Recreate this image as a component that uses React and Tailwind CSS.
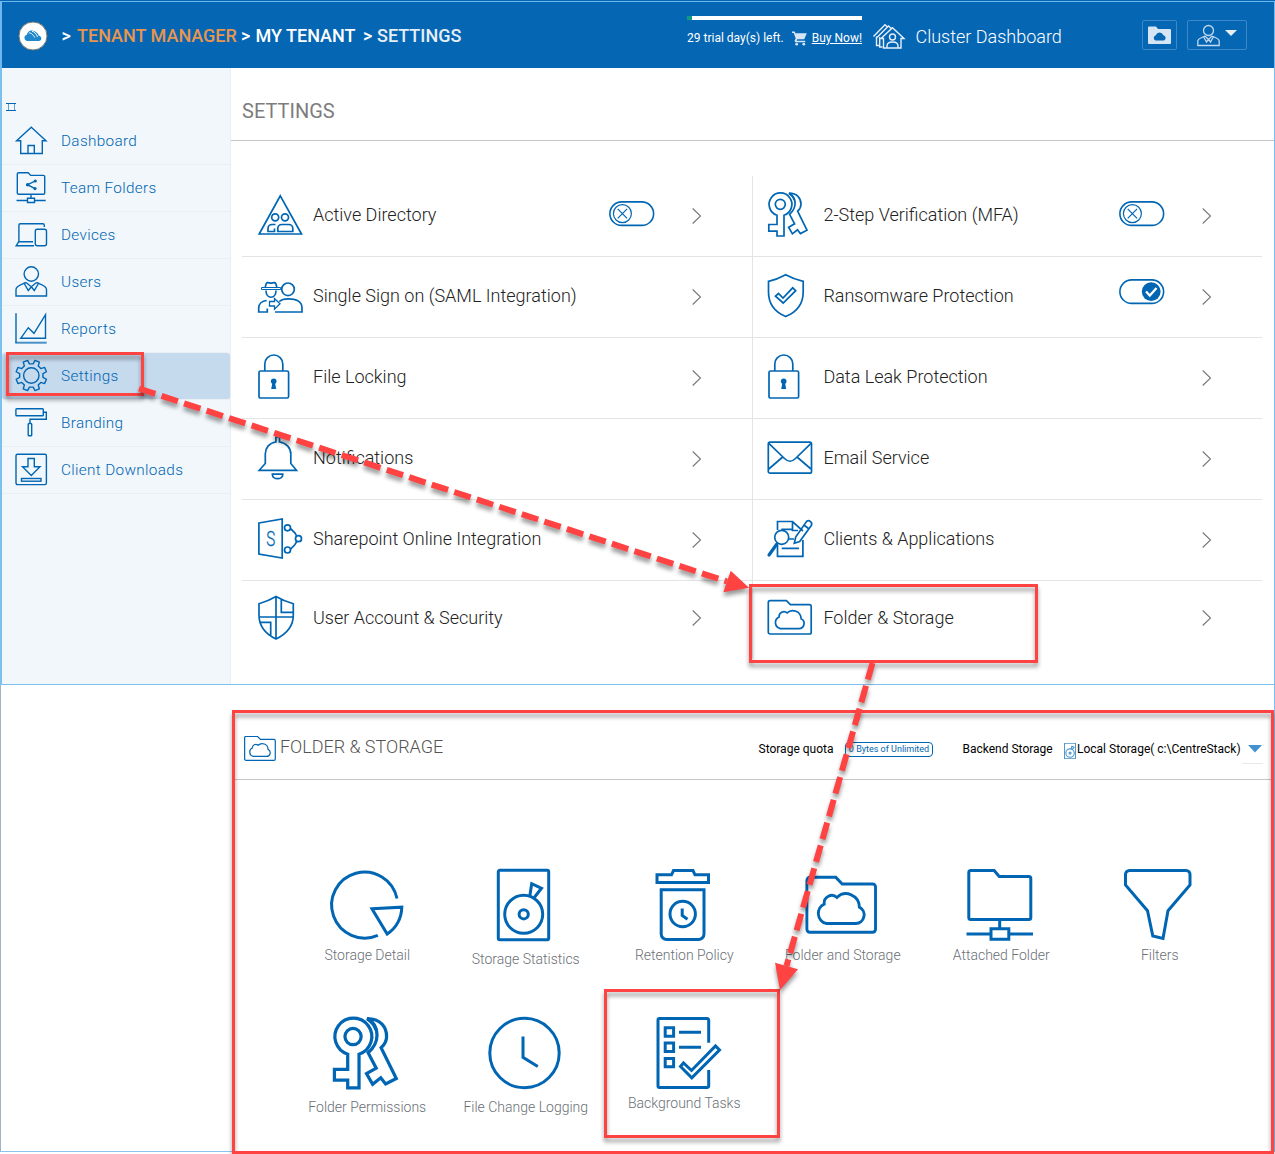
import React from "react";

const BLUE = "#0066b3";

function Svg({ w, h, sw = 1.6, color = BLUE, className = "", children }) {
  return (
    <svg
      width={w}
      height={h}
      viewBox={`0 0 ${w} ${h}`}
      fill="none"
      stroke={color}
      strokeWidth={sw}
      className={`shrink-0 overflow-visible ${className}`}
    >
      {children}
    </svg>
  );
}

/* ---------- shared drawings ---------- */

const FolderCloud = () => (
  <>
    <path d="M1.3 8.5a1.8 1.8 0 0 1 1.8-1.8h16.3l4 4h19a1.8 1.8 0 0 1 1.8 1.8v25.7a1.8 1.8 0 0 1-1.8 1.8H3.1a1.8 1.8 0 0 1-1.8-1.8z" />
    <path d="M13.300 34.600h18.600a5.200 5.200 0 0 0 2.200-9.900a8.300 8.300 0 0 0-14-5.800a4.800 4.800 0 0 0-8 4a6.200 6.200 0 0 0 1.200 11.700z" />
  </>
);

const Keys = () => (
  <>
    <circle cx="13.3" cy="13.3" r="5" />
    <path d="M10 24.2V33.5H1.8V40.2H10V45H17V24.2A11.4 11.4 0 1 0 10 24.2z" />
    <path d="M22 2.2c8.500 0 12 5.500 12 11c0 3-1.200 5-3.400 7l9.400 19l-6.600 3.400l-3-3.800l-5 4l-3.800-6.600l6-3.400l-5-9.500c4-3.500 5.500-7 5.500-11c0-4.500-2-8-6.100-10.100z" />
    <path d="M22 2.200c3 2 4.500 4 5.500 7" />
  </>
);

const Disk = () => (
  <>
    <rect x="11.300" y="3.300" width="50.400" height="69.400" rx="1.500" />
    <circle cx="36.700" cy="47.300" r="19" />
    <circle cx="36.700" cy="47.300" r="4.600" />
    <path d="M42.700 29.700L44.700 16.700L54.500 21.300L46.500 31.500" />
  </>
);

const Lock = () => (
  <>
    <rect x="2" y="18" width="29.600" height="27" rx="1.500" />
    <path d="M7.800 18V11a9 9 0 0 1 18 0v7" />
    <circle cx="16.700" cy="28.300" r="2.800" fill={BLUE} stroke="none" />
    <path d="M15.500 29h2.400l1.300 7h-5z" fill={BLUE} stroke="none" />
  </>
);

/* ---------- sidebar ---------- */

function gearPath(cx, cy, teeth, ro, ri) {
  const step = (Math.PI * 2) / teeth;
  let d = "";
  for (let i = 0; i < teeth; i++) {
    const a = -Math.PI / 2 + step / 2 + i * step;
    const pts = [
      [ri, a - step * 0.3],
      [ro, a - step * 0.19],
      [ro, a + step * 0.19],
      [ri, a + step * 0.3],
    ];
    pts.forEach(([r, t], k) => {
      d += `${i === 0 && k === 0 ? "M" : "L"}${(cx + r * Math.cos(t)).toFixed(2)} ${(cy + r * Math.sin(t)).toFixed(2)}`;
    });
  }
  return d + "Z";
}

const navIcons = {
  dashboard: (
    <>
      <path d="M16.300 2.300L31 15.700H27.300V28.500H5.700V15.700H1.600z" />
      <path d="M13 28.500V20.500h6.300v8" />
    </>
  ),
  team: (
    <>
      <path d="M2.300 2a1.300 1.300 0 0 1 1.300-1.300h9.600l2.500 2.700h12.700a1.300 1.300 0 0 1 1.300 1.300v16.300a1.300 1.300 0 0 1-1.300 1.300H3.600a1.300 1.300 0 0 1-1.300-1.300z" />
      <path d="M16 22.300v4M12.500 26.300h7v4.200h-7zM1.500 28.500h11M19.500 28.500h11.200M20.500 8.800L12.500 12.700L20 16.700" />
      <g fill={BLUE} stroke="none">
        <circle cx="12.600" cy="12.700" r="1.700" />
        <circle cx="20.300" cy="9" r="1.600" />
        <circle cx="20" cy="16.600" r="1.600" />
      </g>
    </>
  ),
  devices: (
    <>
      <path d="M29.300 8V6.200a1.500 1.500 0 0 0-1.500-1.500H5.400a1.500 1.500 0 0 0-1.500 1.500V22.500L1.200 26.700H19M3.900 22.700H18" />
      <rect x="20.300" y="10.200" width="11.200" height="16.500" rx="2" />
    </>
  ),
  users: (
    <>
      <circle cx="16.300" cy="8" r="7.200" />
      <path d="M11 16.500C7 18.500 1 19.500 1 23.500V30H31.500V23.500C31.500 19.500 25.500 18.500 21.500 16.500M11 16.500L16.300 20.800L13.300 24.500L9.500 18M21.500 16.500L16.300 20.800L19.300 24.500L23.200 18" />
    </>
  ),
  reports: (
    <>
      <path d="M1 .3V30" />
      <path d="M.3 29.700H31.700" strokeWidth="2" strokeOpacity=".7" />
      <path d="M5.700 25.300L13.300 14.700L19 20.300L30.500 1.700V25.300z" />
    </>
  ),
  settings: (
    <>
      <path d={gearPath(16.3, 15.5, 8, 15.6, 11.8)} strokeLinejoin="round" />
      <circle cx="16.300" cy="15.500" r="7.700" />
    </>
  ),
  branding: (
    <>
      <rect x=".9" y="1.800" width="27.400" height="7" rx=".8" />
      <path d="M28.300 5.300H31.300V12.300H15V16.500" />
      <rect x="13.200" y="16.500" width="3.500" height="12.300" rx=".8" />
    </>
  ),
  downloads: (
    <>
      <rect x="1" y=".2" width="30.400" height="30.400" rx="1.500" />
      <path d="M13 4.500H19.300V12.700H25L16.300 21.500L7.500 12.700H13z" />
      <rect x="6.500" y="24.500" width="19.500" height="2.700" />
    </>
  ),
};

const nav = [
  ["dashboard", "Dashboard"],
  ["team", "Team Folders"],
  ["devices", "Devices"],
  ["users", "Users"],
  ["reports", "Reports"],
  ["settings", "Settings"],
  ["branding", "Branding"],
  ["downloads", "Client Downloads"],
];

function Sidebar() {
  return (
    <aside className="w-[229px] shrink-0 border-r border-[#e9eef2] bg-[#f1f7fb]">
      <div className="h-[50px] pt-[35px] pl-1">
        <Svg w={10} h={8} sw={1}>
          <path d="M0 .5H10M0 7.500H10" />
          <path d="M2.500 .5V7.500M8.500 .5V7.500" strokeOpacity=".6" />
        </Svg>
      </div>
      <nav>
        {nav.map(([id, label]) => (
          <a
            key={id}
            className={`flex h-[47px] border-b border-[#eaeff3] pt-[7px] pl-[13px] ${
              id === "settings" ? "rounded-[3px] bg-[#c6daee]" : ""
            }`}
          >
            <Svg w={32} h={32} sw={1.4}>
              {navIcons[id]}
            </Svg>
            <span className="ml-3.5 pt-1.5 text-[15.300px] leading-5 font-light tracking-[0.340px] text-[#0066b3]">
              {label}
            </span>
          </a>
        ))}
      </nav>
    </aside>
  );
}

/* ---------- settings grid ---------- */

const rowIcons = {
  ad: (
    <>
      <path d="M23.300 4.800L44.500 43H2.200z" />
      <circle cx="18.200" cy="26.300" r="3.500" />
      <circle cx="28" cy="26.300" r="3.500" />
      <path d="M20.800 40.500V37.500a4 4 0 0 1 4-4h7a4 4 0 0 1 4 4v3zM18.500 33.500H15a4 4 0 0 0-4 4v3h6.500v-3" />
    </>
  ),
  sso: (
    <>
      <path d="M8.300 15.500c.3-3 .7-4.500 2.200-4.900c1.500-.3 2 .6 3.500 .6s2-.9 3.500-.6c1.500 .4 2 1.900 2.200 4.900" />
      <path d="M4.500 15.500h19.200v2H4.500z" strokeWidth="1" />
      <path d="M9 18.500c0 9 10 9 10 0" />
      <circle cx="31" cy="17.300" r="6.300" />
      <path d="M22.300 29.500c2-2 5-2.700 9-2.700c8 0 13.700 3 13.700 9V40H18M9.700 28.500C5 29 1.700 32 1.700 36V40h8.600V36.500" />
      <path d="M12.500 29.500h5v-3L23 31.800l-5.500 5.300V34h-5z" strokeWidth="1.300" />
    </>
  ),
  lock: <Lock />,
  bell: (
    <>
      <path d="M18.900 8V3h3.600v5c7 1 11.300 6 11.300 12V29.500L39.500 36.300H2.200L8.300 29.500V20c0-6 3.700-11 10.600-12z" />
      <path d="M15.300 40.200h10.500c0 6-10.500 6-10.500 0z" />
    </>
  ),
  sharepoint: (
    <>
      <path d="M1.900 8L25.200 3.900V43L1.900 39z" />
      <circle cx="30.500" cy="12.800" r="3" />
      <circle cx="41.500" cy="23.700" r="3" />
      <circle cx="30.500" cy="35" r="3" />
      <path d="M33.300 13.300l4.500 4.500l2 3.300M33.300 34.300l4.500-4.500l2-3.300" />
      <text
        x="13.700"
        y="31"
        textAnchor="middle"
        fontSize="20"
        fontWeight="300"
        textLength="9"
        lengthAdjust="spacingAndGlyphs"
        fill={BLUE}
        stroke={BLUE}
        strokeWidth=".3"
      >
        S
      </text>
    </>
  ),
  shield: (
    <path d="M19 2.500C13 6 8 8 2 9.700V21c0 11 6.500 19 17 24c10.500-5 17.300-13 17.300-24V9.700C30 8 25 6 19 2.500zM19 2.500V45M2 23H36.300M24.300 5.800V18.300H36.300M3.200 28.300H13.700V42" />
  ),
  keys: <Keys />,
  ransom: (
    <>
      <path d="M18.700 2.800C13 6 8 8 1.500 9.300V20c0 11 5 19.500 17.200 24.500C31 39.500 36.200 31 36.200 20V9.300C30 8 24.500 6 18.700 2.800z" />
      <path d="M8.500 24.200L11.500 21.500L16 26L25.700 15.800L28.700 18.700L16.200 31z" />
    </>
  ),
  mail: (
    <>
      <rect x="1.300" y="8.200" width="43.200" height="31" rx="1.800" />
      <path d="M1.800 9.300L17.500 24.500c4 3.800 7 3.800 11 0L44 9.300M1.800 35L15.700 23M44 35L30 23" />
    </>
  ),
  clients: (
    <>
      <path d="M10.500 15V6.500H25.500L35.900 16M25.500 6.500V15.500H31M35.900 25V41.300H10.500V30" />
      <circle cx="14.700" cy="22.300" r="7" />
      <path d="M9.700 29.300L2 40" strokeWidth="3.200" strokeLinecap="round" />
      <path d="M14.300 14.300H25.700M22 24H27M14.700 33.300H32" />
      <path d="M39.500 6.500a3.200 3.200 0 0 1 4.800 4L32.700 26.500L27.300 28.300L28.700 22zM37 10l5 4" />
    </>
  ),
  folder: <FolderCloud />,
};

function Toggle({ on }) {
  return (
    <Svg w={46} h={26} sw={1.6}>
      <rect x=".9" y=".9" width="43.700" height="23.500" rx="11.750" />
      {on ? (
        <>
          <circle cx="32.200" cy="12.600" r="9.400" fill={BLUE} stroke="none" />
          <path d="M27 12.500l3.800 4l6.700-7.500" stroke="#fff" strokeWidth="2.300" />
        </>
      ) : (
        <>
          <circle cx="13.400" cy="12.600" r="9" strokeWidth="1.200" />
          <path d="M8.700 7.900l9.400 9.400M18.100 7.900l-9.400 9.400" strokeWidth="1.200" />
        </>
      )}
    </Svg>
  );
}

const leftRows = [
  ["ad", "Active Directory", "off"],
  ["sso", "Single Sign on (SAML Integration)"],
  ["lock", "File Locking"],
  ["bell", "Notifications"],
  ["sharepoint", "Sharepoint Online Integration"],
  ["shield", "User Account & Security"],
];
const rightRows = [
  ["keys", "2-Step Verification (MFA)", "off"],
  ["ransom", "Ransomware Protection", "on"],
  ["lock", "Data Leak Protection"],
  ["mail", "Email Service"],
  ["clients", "Clients & Applications"],
  ["folder", "Folder & Storage"],
];

function SettingRow({ id, label, toggle, last }) {
  return (
    <div
      className={`flex ${
        last ? "h-[77px] pt-[13px]" : "h-[81px] border-b border-[#e4e4e4] pt-[15px]"
      }`}
    >
      <Svg w={48} h={48} sw={1.7}>
        {rowIcons[id]}
      </Svg>
      <span className="ml-2 w-[296px] pt-3 text-[18px] leading-6 font-light whitespace-nowrap text-[#222]">
        {label}
      </span>
      <div className={`w-[83px] ${toggle === "on" ? "pt-[7px]" : "pt-[10px]"}`}>
        {toggle && <Toggle on={toggle === "on"} />}
      </div>
      <Svg w={10} h={16} sw={1.1} color="#777" className={last ? "mt-4" : "mt-[17px]"}>
        <path d="M.7 .5L8.500 8L.7 15.500" />
      </Svg>
    </div>
  );
}

function SettingsPanel() {
  return (
    <main className="flex-1">
      <h1 className="h-[73px] border-b border-[#c6c6c6] pt-[31px] pl-[11px] text-[20px] leading-6 font-normal text-[#7d7d7d]">
        SETTINGS
      </h1>
      <div className="mt-[35px] ml-[11px] flex">
        <div className="w-[511px] border-r border-[#e4e4e4] [&>div]:pl-[15px]">
          {leftRows.map(([id, label, t], i) => (
            <SettingRow key={id} id={id} label={label} toggle={t} last={i === 5} />
          ))}
        </div>
        <div className="w-[509px] [&>div]:pl-[14.400px]">
          {rightRows.map(([id, label, t], i) => (
            <SettingRow key={id} id={id} label={label} toggle={t} last={i === 5} />
          ))}
        </div>
      </div>
    </main>
  );
}

/* ---------- header ---------- */

function Header() {
  return (
    <header className="flex h-[68px] shrink-0 bg-[#0566b4] text-white">
      <div className="mt-px flex flex-1 border-t border-l-2 border-[#6fb8ee]">
        <svg width="28" height="28" viewBox="0 0 28 28" className="mt-5 ml-[17px] shrink-0 overflow-visible">
          <circle cx="14" cy="14" r="14" fill="#fff" stroke="#7d7a6c" strokeWidth="1" />
          <path
            d="M8.500 19a3.200 3.200 0 0 1-.6-6.300c.2-3 4-5.500 7.300-3.700c2.500 1 4 2.800 4.500 4.500c3.500 .8 3.500 5.500 0 5.500z"
            fill="#1f87cc"
          />
          <path d="M9.800 11c2.500-.5 4.500 2 6 4.500M13 9.300c2.200 0 4.500 2.700 5.500 5.500" stroke="#fff" strokeWidth="1" fill="none" />
        </svg>
        <div className="flex pt-[22px] pl-[14.500px] text-[18px] leading-6 font-medium whitespace-nowrap">
          <span className="w-[15.500px]">&gt;</span>
          <span className="w-[164px] text-[#e8954f]">TENANT MANAGER</span>
          <span className="w-[14.500px]">&gt;</span>
          <span className="w-[107.500px]">MY TENANT</span>
          <span className="w-[14px]">&gt;</span>
          <span className="text-[#e6eef6]">SETTINGS</span>
        </div>
      </div>
      <div className="mt-px flex w-[588px] border-t border-r border-[#6fb8ee]">
        <div className="w-[175px] pt-3.5">
          <div className="h-1 border-l-[5px] border-[#0e9a84] bg-white" />
          <div className="flex pt-[9px] text-[12px] leading-[18px]">
            <span className="w-[105px] whitespace-nowrap">29 trial day(s) left.</span>
            <svg width="15" height="15" viewBox="0 0 15 15" className="mt-0.5 mr-[5px] shrink-0" fill="#d5e5f4">
              <path d="M0 .5h2.700l.7 1.700h11.400l-2.600 6H5.400l-.8 1.600h8.600v1.500H3.500L2.400 10l1.300-2.500L1.700 2H0z" />
              <circle cx="4.700" cy="13.200" r="1.400" />
              <circle cx="11.800" cy="13.200" r="1.400" />
            </svg>
            <span className="whitespace-nowrap underline">Buy Now!</span>
          </div>
        </div>
        <Svg w={32} h={25} sw={1.4} color="#e6eff8" className="mt-[22px] ml-[10.500px]">
          <path d="M.5 12.500L12 .8L15 3.500M4 13.500L15.500 2L19 5.200M8 14.500L19.500 3.700L31 14.500H28V24H10.500V14.500z" />
          <path d="M3.500 12.500V21.500H6.500M6.700 13V23H9.500" />
          <circle cx="19.500" cy="13" r="3" />
          <path d="M14 24v-2c0-3 2-4 5.500-4s5.500 1 5.500 4v2" />
        </Svg>
        <span className="ml-[11px] pt-[23px] text-[18px] leading-6 font-light whitespace-nowrap">
          Cluster Dashboard
        </span>
        <div className="mt-[18px] mr-[27px] ml-auto flex gap-2.5">
          <div className="flex h-[30px] w-[35px] items-center justify-center rounded-xs border border-[#3d88c8]">
            <svg width="23" height="18" viewBox="0 0 23 18">
              <path d="M0 1.500A1 1 0 0 1 1 .5h7l2 2.500h12a1 1 0 0 1 1 1V17a1 1 0 0 1-1 1H1a1 1 0 0 1-1-1z" fill="#d5e5f4" />
              <path d="M7.500 14.500a2.800 2.800 0 0 1 .3-5.300a4 4 0 0 1 7.500 0a2.800 2.800 0 0 1 .7 5.300z" fill="#0566b4" />
            </svg>
          </div>
          <div className="flex h-[30px] w-[60px] rounded-xs border border-[#3d88c8] pt-1 pl-[9px]">
            <Svg w={23} h={21} sw={1.3} color="#c2d9ee">
              <circle cx="11.500" cy="5.500" r="5" />
              <path d="M8 11C5 12.500 .8 13.500 .8 16v4.500H22.200V16c0-2.500-4.200-3.500-7.200-5M8 11l3.500 3.500l-2 2.500l-2.800-5M15 11l-3.500 3.500l2 2.500l2.800-5" />
            </Svg>
            <svg width="12" height="6" viewBox="0 0 12 6" className="mt-[5px] ml-[5px]">
              <path d="M0 0H12L6 6z" fill="#e6eff8" />
            </svg>
          </div>
        </div>
      </div>
    </header>
  );
}

/* ---------- folder & storage panel ---------- */

const tiles = [
  {
    label: "Storage Detail",
    icon: (
      <>
        <path d="M68 31.500A33 33 0 1 0 48.800 68.300" />
        <path d="M43 41.800L72.800 40.200A34 34 0 0 1 58.200 67z" />
      </>
    ),
  },
  { label: "Storage Statistics", low: true, icon: <Disk /> },
  {
    label: "Retention Policy",
    icon: (
      <>
        <path d="M11 15.500V7.800H25.500L27.500 3.500H47L49 7.800H62.500V15.500z" />
        <path d="M15.200 22.700H58V67a5.500 5.500 0 0 1-5.500 5.500H20.700a5.500 5.500 0 0 1-5.500-5.500z" />
        <circle cx="36.700" cy="47" r="12.700" />
        <path d="M36.200 41.500V48.500L41.500 52.300" />
      </>
    ),
  },
  {
    label: "Folder and Storage",
    icon: (
      <g transform="translate(.8 -.7) scale(1.600 1.650)" strokeWidth="1.800">
        <FolderCloud />
      </g>
    ),
  },
  {
    label: "Attached Folder",
    icon: (
      <>
        <path d="M5.800 5.500a2 2 0 0 1 2-2h23.400l5 6h29.600a2 2 0 0 1 2 2V50.500a2 2 0 0 1-2 2H7.800a2 2 0 0 1-2-2z" />
        <path d="M36.700 52.500V61.500M28 61.800H45.800V72.300H28zM3.500 67H28M45.800 67H70" />
      </>
    ),
  },
  {
    label: "Filters",
    icon: (
      <path d="M4.500 7.500a4 4 0 0 1 4-4H65a4 4 0 0 1 4 4V18L47 43.700L42 71.500L31.800 69L26.500 43.700L4.500 18z" />
    ),
  },
  {
    label: "Folder Permissions",
    low: true,
    icon: (
      <g transform="translate(2.500 0) scale(1.620)" strokeWidth="2">
        <Keys />
      </g>
    ),
  },
  {
    label: "File Change Logging",
    low: true,
    icon: (
      <>
        <circle cx="37.500" cy="38" r="34.700" />
        <path d="M36 21.500V42.300L50.800 51.500" />
      </>
    ),
  },
  {
    label: "Background Tasks",
    icon: (
      <>
        <path d="M62.700 27.700V5a1.500 1.500 0 0 0-1.500-1.500H13.500A1.500 1.500 0 0 0 12 5V71a1.500 1.500 0 0 0 1.500 1.500H61.200A1.500 1.500 0 0 0 62.700 71V55" />
        <path d="M19.200 12.800h8.400v8.400h-8.400zM19.200 28.100h8.400v8.400h-8.400zM19.200 43.400h8.400v8.400h-8.400zM33 17.300H55M33 32.300H55" />
        <path d="M34.500 51.500L37.500 48L45.500 55.500L69.500 31L73.500 35L45.800 62.800z" />
      </>
    ),
  },
];

function FolderStoragePanel() {
  return (
    <section className="ml-[234px] h-[466px] w-[1038px] pt-[26px]">
      <div className="flex h-[69px] border-b border-[#c6c6c6] pt-[25px] pl-[9px]">
        <svg
          width="32"
          height="25"
          viewBox="0.500 6 44.600 35"
          fill="none"
          stroke={BLUE}
          strokeWidth="1.700"
          className="shrink-0"
        >
          <FolderCloud />
        </svg>
        <h2 className="ml-1 w-[478.500px] text-[18px] leading-[22px] font-light tracking-[-0.030px] text-[#555]">
          FOLDER &amp; STORAGE
        </h2>
        <div className="flex pt-1 text-[12px] leading-[18px] whitespace-nowrap text-black">
          <span className="w-[86.500px]">Storage quota</span>
          <span className="mt-[2px] h-[15px] w-[88px] rounded-[4px] border border-[#0066b3] text-center text-[9px] leading-[13px] text-[#0066b3]">
            0 Bytes of Unlimited
          </span>
          <span className="ml-[29.500px] w-[101px]">Backend Storage</span>
          <svg
            width="12"
            height="16"
            viewBox="10 2 53 72"
            fill="none"
            stroke="#4a94cc"
            strokeWidth="5"
            className="mt-[3px] mr-[1.500px] shrink-0"
          >
            <Disk />
          </svg>
          <span className="w-[164.500px]">Local Storage( c:\CentreStack)</span>
          <span className="h-[15px] w-[21px] pt-[5px] pl-[6px]">
            <svg width="14" height="8" viewBox="0 0 14 8">
              <path d="M0 0H14L7 7.500z" fill="#4292d2" />
            </svg>
            <span className="mt-[10px] -ml-[6px] block h-px w-[21px] bg-[#e8e8e8]" />
          </span>
        </div>
      </div>
      <div className="ml-[53px] grid w-[951px] grid-cols-6 pt-[87px]">
        {tiles.map((t) => (
          <div key={t.label} className="flex h-[148px] flex-col items-center">
            <Svg w={76} h={76} sw={3} className="-ml-px">
              {t.icon}
            </Svg>
            <span
              className={`text-[14px] leading-5 font-light whitespace-nowrap text-[#6b7076] ${
                t.low ? "pt-1.5" : "pt-0.5"
              }`}
            >
              {t.label}
            </span>
          </div>
        ))}
      </div>
    </section>
  );
}

/* ---------- red callouts ---------- */

function Callouts() {
  return (
    <div className="pointer-events-none absolute inset-0">
      <div className="absolute top-[352px] left-[6px] h-[44px] w-[138px] border-3 border-[#ff4343] drop-shadow-[0_4px_2px_rgba(0,0,0,0.4)]" />
      <div className="absolute top-[584px] left-[749px] h-[79px] w-[289px] border-3 border-[#ff4343] drop-shadow-[0_4px_2px_rgba(0,0,0,0.4)]" />
      <div className="absolute top-[710px] left-[232px] h-[444px] w-[1042px] border-3 border-[#ff4343] drop-shadow-[0_4px_2px_rgba(0,0,0,0.4)]" />
      <div className="absolute top-[989px] left-[604px] h-[149px] w-[176px] border-3 border-[#ff4343] drop-shadow-[0_4px_2px_rgba(0,0,0,0.4)]" />
      <svg
        width="1275"
        height="1154"
        viewBox="0 0 1275 1154"
        className="absolute inset-0 drop-shadow-[0_4px_2px_rgba(0,0,0,0.4)]"
        stroke="#ff4343"
        strokeWidth="6"
        strokeDasharray="17.200 6.500"
        fill="none"
      >
        <path d="M139 388.500L727 581.500" />
        <path d="M872.500 663L786.500 966" />
        <g fill="#ff4343" stroke="none">
          <path d="M730.700 570.700L723.300 592.300L749 587.700z" />
          <path d="M775 962.700L798 969.300L780 990z" />
        </g>
      </svg>
    </div>
  );
}

export default function App() {
  return (
    <div className="relative h-[1154px] w-[1275px] overflow-hidden bg-white font-['Roboto',sans-serif]">
      <Header />
      <div className="flex h-[617px] border-r border-b border-l-2 border-[#7cc0f0]">
        <Sidebar />
        <SettingsPanel />
      </div>
      <div className="h-[467px] border-r border-b border-l border-r-[#7cc0f0] border-b-[#8cc4ec] border-l-[#9fb4c4]">
        <FolderStoragePanel />
      </div>
      <Callouts />
    </div>
  );
}
